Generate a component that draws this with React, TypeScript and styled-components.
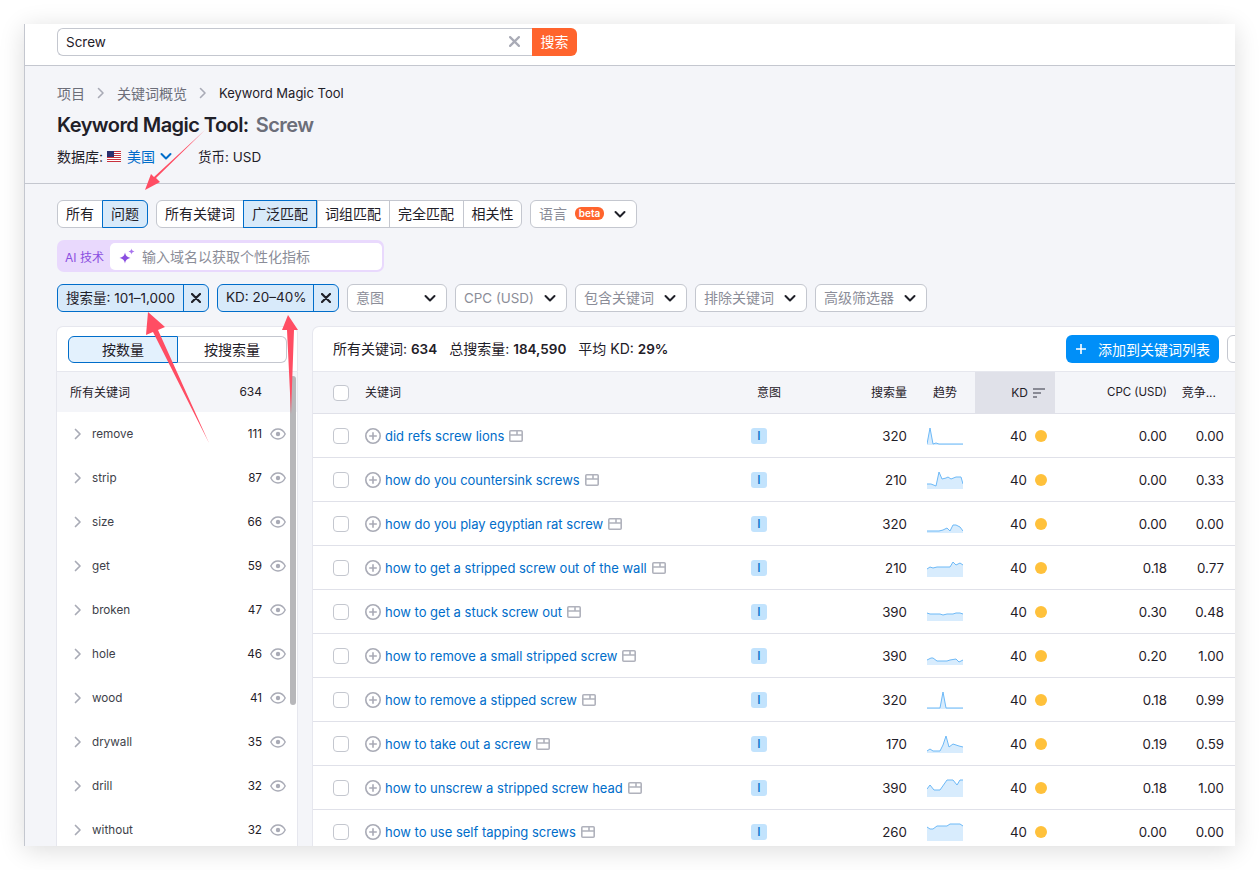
import React from 'react';
import styled, { createGlobalStyle } from 'styled-components';

const GlobalStyle = createGlobalStyle`
  html, body {
    margin: 0;
    padding: 0;
    background: #fff;
  }
  body {
    font-family: Inter, 'Noto Sans CJK SC', sans-serif;
    color: #1f2028;
  }
  * {
    box-sizing: border-box;
  }
`;

const Page = styled.div`
  width: 1259px;
  height: 870px;
  padding: 24px 24px 24px 24px;
  overflow: hidden;
`;

const Frame = styled.div`
  position: relative;
  width: 1211px;
  height: 822px;
  overflow: hidden;
  background: #f4f5f9;
  border-left: 1px solid #c4c7cf;
  box-shadow: 0 4px 24px rgba(0, 0, 0, 0.14);
`;

const SearchBar = styled.div`
  display: flex;
  height: 42px;
  padding: 4px 0 0 32px;
  background: #fff;
  border-bottom: 1px solid #c4c7cf;
`;

const SearchInput = styled.div`
  display: flex;
  align-items: center;
  justify-content: space-between;
  width: 475px;
  height: 28px;
  padding: 0 12px 1px 8px;
  background: #fff;
  border: 1px solid #c4c7cf;
  border-right: 0;
  border-radius: 6px 0 0 6px;
  font-size: 13.5px;
`;

const SearchButton = styled.div`
  display: flex;
  align-items: center;
  justify-content: center;
  width: 45px;
  height: 28px;
  padding-bottom: 2px;
  background: #ff642d;
  color: #fff;
  font-size: 14px;
  border-radius: 0 6px 6px 0;
`;

const Intro = styled.div`
  height: 118px;
  padding: 17px 0 0 32px;
  border-bottom: 1px solid #c4c7cf;
`;

const Crumbs = styled.div`
  display: flex;
  align-items: center;
  height: 20px;
  font-size: 14px;
  color: #6c6e79;
`;

const CrumbGap = styled.span`
  display: flex;
  justify-content: center;
  width: 32px;
`;

const CrumbCurrent = styled.span`
  color: #1f2028;
  font-size: 13px;
`;

const Title = styled.h1`
  display: flex;
  gap: 7px;
  margin: 10px 0 0;
  font-size: 20px;
  line-height: 24px;
  font-weight: 600;
  letter-spacing: -0.55px;
`;

const TitleQuery = styled.span`
  color: #6c6e79;
`;

const Meta = styled.div`
  display: flex;
  align-items: center;
  height: 20px;
  margin-top: 9px;
  font-size: 14px;
`;

const MetaLink = styled.span`
  color: #006dca;
  margin: 0 5px 0 6px;
`;

const Currency = styled.span`
  margin-left: 26px;
  font-size: 13.5px;
`;

const Controls = styled.div`
  padding: 16px 0 15px 32px;
`;

const ControlRow = styled.div`
  display: flex;
  gap: 8px;
  height: 28px;
`;

const Segment = styled.div`
  display: flex;
  height: 28px;
  background: #fff;
  border: 1px solid #c4c7cf;
  border-radius: 6px;
`;

const SegmentItem = styled.div<{ $w: number; $on?: boolean }>`
  display: flex;
  align-items: center;
  justify-content: center;
  width: ${p => p.$w}px;
  margin: -1px 0;
  padding-bottom: 2px;
  font-size: 14px;
  border-left: 1px solid ${p => (p.$on ? '#006dca' : '#c4c7cf')};
  border-top: 1px solid ${p => (p.$on ? '#006dca' : 'transparent')};
  border-bottom: 1px solid ${p => (p.$on ? '#006dca' : 'transparent')};
  border-right: 1px solid ${p => (p.$on ? '#006dca' : 'transparent')};
  background: ${p => (p.$on ? '#d8eafa' : 'transparent')};
  &:first-child {
    border-left-color: transparent;
  }
  &:last-child {
    margin-right: -1px;
    border-radius: 0 6px 6px 0;
  }
`;

const Select = styled.div<{ $w: number }>`
  display: flex;
  align-items: center;
  justify-content: space-between;
  width: ${p => p.$w}px;
  height: 28px;
  padding: 0 10px 0 8px;
  background: #fff;
  border: 1px solid #c4c7cf;
  border-radius: 6px;
  font-size: 14px;
  color: #8b8d98;
`;

const SelectLabel = styled.span`
  display: flex;
  align-items: center;
  gap: 8px;
  padding-bottom: 2px;
`;

const LatinLabel = styled.span`
  font-size: 13.4px;
  padding-bottom: 1px;
`;

const Beta = styled.span`
  display: flex;
  align-items: center;
  justify-content: center;
  width: 29px;
  height: 13px;
  padding-bottom: 1px;
  background: #ff642d;
  color: #fff;
  border-radius: 6px;
  font-size: 10px;
  font-weight: 600;
`;

const AiBox = styled.div`
  display: flex;
  align-items: center;
  width: 327px;
  height: 32px;
  margin: 12px 0;
  padding: 3px 2px 2px 8px;
  background: #e9d9fd;
  border-radius: 7px;
  color: #8b4fe0;
  font-size: 12px;
`;

const AiInput = styled.div`
  display: flex;
  align-items: center;
  gap: 7px;
  flex: 1;
  height: 27px;
  margin-left: 6px;
  padding: 0 0 2px 9px;
  background: #fff;
  border-radius: 5px;
  color: #8b8d98;
  font-size: 14px;
`;

const Chip = styled.div<{ $w: number }>`
  display: flex;
  width: ${p => p.$w}px;
  height: 28px;
  background: #d8eafa;
  border: 1px solid #006dca;
  border-radius: 6px;
  font-size: 13.5px;
`;

const ChipLabel = styled.span`
  display: flex;
  align-items: center;
  flex: 1;
  padding: 0 0 2px 8px;
  white-space: nowrap;
`;

const ChipClose = styled.span`
  display: flex;
  align-items: center;
  justify-content: center;
  width: 25px;
  border-left: 1px solid #006dca;
`;

const Workspace = styled.div`
  display: flex;
  gap: 16px;
  padding-left: 32px;
`;

const Sidebar = styled.div`
  position: relative;
  flex: none;
  width: 240px;
  height: 600px;
  background: #fff;
  border-radius: 6px 6px 0 0;
  box-shadow: 0 0 0 1px #e6e7ee;
`;

const SideToggle = styled.div`
  display: flex;
  height: 45px;
  padding: 9px 10px 8px 11px;
  border-bottom: 1px solid #e6e7ee;
`;

const ToggleItem = styled.div<{ $on?: boolean }>`
  display: flex;
  align-items: center;
  justify-content: center;
  flex: 1;
  font-size: 14px;
  padding-bottom: 1px;
  background: ${p => (p.$on ? '#e3f1fd' : '#fff')};
  border: 1px solid ${p => (p.$on ? '#006dca' : '#c4c7cf')};
  border-left-width: ${p => (p.$on ? 1 : 0)}px;
  border-radius: ${p => (p.$on ? '6px 0 0 6px' : '0 6px 6px 0')};
`;

const SideAll = styled.div`
  display: flex;
  align-items: center;
  justify-content: space-between;
  height: 40px;
  padding: 0 35px 2px 13px;
  background: #f4f5f9;
  font-size: 12px;
`;

const SideRow = styled.div`
  display: flex;
  align-items: center;
  height: 44px;
  padding: 0 11px 0 17px;
  font-size: 11.7px;
  color: #3e3f4a;
`;

const SideName = styled.span`
  flex: 1;
  margin-left: 10px;
`;

const SideCount = styled.span`
  margin-right: 8px;
  color: #1f2028;
`;

const ScrollThumb = styled.div`
  position: absolute;
  top: 49px;
  right: 1px;
  width: 6px;
  height: 329px;
  background: #b7b7ba;
  border-radius: 3px;
`;

const TablePanel = styled.div`
  flex: none;
  width: 940px;
  height: 600px;
  background: #fff;
  border-radius: 6px 0 0 0;
  box-shadow: 0 0 0 1px #e6e7ee;
`;

const Summary = styled.div`
  display: flex;
  align-items: center;
  height: 45px;
  padding: 0 0 0 20px;
  font-size: 14px;
  border-bottom: 1px solid #e6e7ee;
`;

const SummaryItem = styled.span`
  margin-right: 12px;
  padding-bottom: 2px;
  b {
    font-weight: 600;
    font-size: 13.5px;
  }
`;

const AddButton = styled.div`
  display: flex;
  align-items: center;
  gap: 12px;
  width: 153px;
  height: 28px;
  margin-left: auto;
  padding: 0 0 0 10px;
  background: #008ff8;
  color: #fff;
  border-radius: 6px;
  font-size: 14px;
`;

const StubButton = styled.div`
  flex: none;
  width: 26px;
  height: 28px;
  margin: 0 0 0 8px;
  border: 1px solid #c4c7cf;
  border-radius: 6px;
  background: #fff;
`;

const columns = '52px 386px 90px 66px 68px 80px 112px 57px 29px';

const HeadRow = styled.div`
  display: grid;
  grid-template-columns: ${columns};
  align-items: center;
  height: 42px;
  background: #f4f5f9;
  border-bottom: 1px solid #e0e1e9;
  font-size: 12px;
`;

const HeadText = styled.div<{ $right?: boolean; $pad?: number }>`
  padding-bottom: 2px;
  text-align: ${p => (p.$right ? 'right' : 'left')};
  padding-right: ${p => (p.$right ? p.$pad || 0 : 0)}px;
  padding-left: ${p => (p.$right ? 0 : p.$pad || 0)}px;
  white-space: nowrap;
`;

const CpcLabel = styled.span`
  font-size: 11.5px;
`;

const BodyRow = styled.div`
  display: grid;
  grid-template-columns: ${columns};
  align-items: center;
  height: 44px;
  border-bottom: 1px solid #e0e1e9;
  font-size: 13.3px;
`;

const CheckCell = styled.div`
  padding-left: 20px;
`;

const Checkbox = styled.div`
  width: 16px;
  height: 16px;
  background: #fff;
  border: 1px solid #c4c7cf;
  border-radius: 4px;
`;

const RightCell = styled.div`
  text-align: right;
`;

const KdHead = styled.div`
  display: flex;
  align-items: center;
  justify-content: flex-end;
  gap: 5px;
  align-self: stretch;
  padding-right: 10px;
  background: #e0e1e9;
`;

const KeywordCell = styled.div`
  display: flex;
  align-items: center;
`;

const KeywordLink = styled.span`
  margin: 0 5px 0 4px;
  color: #006dca;
  font-size: 13px;
  white-space: nowrap;
`;

const IntentBadge = styled.span`
  display: flex;
  align-items: center;
  justify-content: center;
  width: 16px;
  height: 16px;
  background: #c2e3fd;
  color: #006dca;
  border-radius: 3px;
  font-size: 12px;
  font-weight: 500;
`;

const TrendCell = styled.div`
  display: flex;
  padding-left: 20px;
`;

const KdCell = styled.div`
  display: flex;
  align-items: center;
  justify-content: flex-end;
  gap: 8px;
  padding-right: 8px;
`;

const KdDot = styled.span`
  width: 12px;
  height: 12px;
  border-radius: 50%;
  background: #ffc13b;
`;

const ArrowLayer = styled.svg`
  position: absolute;
  top: -24px;
  left: -25px;
  pointer-events: none;
`;

const Chevron = ({ color = '#1f2028' }: { color?: string }) => (
  <svg width="12" height="12" viewBox="0 0 12 12" fill="none">
    <path d="M1.5 4l4.5 4.5L10.5 4" stroke={color} strokeWidth="2" strokeLinecap="round" strokeLinejoin="round" />
  </svg>
);

const CrumbArrow = () => (
  <svg width="8" height="12" viewBox="0 0 8 12" fill="none">
    <path d="M1.5 1.5L6 6l-4.5 4.5" stroke="#a9abb6" strokeWidth="1.6" strokeLinecap="round" strokeLinejoin="round" />
  </svg>
);

const Close = ({ color = '#1f2028', size = 10, weight = 2.2 }: { color?: string; size?: number; weight?: number }) => (
  <svg width={size} height={size} viewBox="0 0 10 10" fill="none">
    <path d="M1 1l8 8M9 1l-8 8" stroke={color} strokeWidth={weight} strokeLinecap="round" />
  </svg>
);

const Flag = () => (
  <svg width="14" height="11" viewBox="0 0 14 11">
    <rect width="14" height="11" fill="#fff" />
    {[0, 2, 4, 6, 8, 10].map(y => (
      <rect key={y} y={y} width="14" height="1" fill="#c8313e" />
    ))}
    <rect width="7" height="6" fill="#2b2f6e" />
  </svg>
);

const Sparkle = () => (
  <svg width="16" height="16" viewBox="0 0 16 16" style={{ flex: 'none' }}>
    <path d="M6 4.5c.7 3.3 1.9 4.6 5.5 5.5-3.6.9-4.8 2.2-5.500 5.500C5.300 12.200 4.100 10.900.5 10 4.100 9.100 5.300 7.800 6 4.500z" fill="#8b4fe0" />
    <path d="M12.5.5c.4 1.8 1 2.5 3 3-2 .5-2.6 1.2-3 3-.4-1.8-1-2.5-3-3 2-.5 2.6-1.2 3-3z" fill="#a874ee" />
  </svg>
);

const RowArrow = () => (
  <svg width="8" height="12" viewBox="0 0 8 12" fill="none">
    <path d="M1.5 1.5L6 6l-4.5 4.5" stroke="#a9abb6" strokeWidth="1.7" strokeLinecap="round" strokeLinejoin="round" />
  </svg>
);

const Eye = () => (
  <svg width="16" height="12" viewBox="0 0 16 12" fill="none">
    <path d="M.8 6C2.5 2.7 5 1 8 1s5.5 1.7 7.2 5c-1.7 3.3-4.2 5-7.2 5S2.5 9.3.8 6z" stroke="#a9abb6" strokeWidth="1.4" />
    <circle cx="8" cy="6" r="2.2" fill="#a9abb6" />
  </svg>
);

const PlusCircle = () => (
  <svg width="16" height="16" viewBox="0 0 16 16" fill="none" style={{ flex: 'none' }}>
    <circle cx="8" cy="8" r="7.2" stroke="#a9abb6" strokeWidth="1.6" />
    <path d="M8 4.2v7.6M4.2 8h7.6" stroke="#a9abb6" strokeWidth="1.6" />
  </svg>
);

const SerpIcon = () => (
  <svg width="14" height="12" viewBox="0 0 14 12" fill="none" style={{ flex: 'none' }}>
    <rect x=".8" y=".8" width="12.4" height="10.4" rx="1" stroke="#b0b2bc" strokeWidth="1.6" />
    <path d="M1 5h12M8 1v4" stroke="#b0b2bc" strokeWidth="1.6" />
  </svg>
);

const SortIcon = () => (
  <svg width="12" height="10" viewBox="0 0 12 10" fill="none">
    <path d="M0 1h12M0 5h8M0 9h4" stroke="#6c6e79" strokeWidth="1.5" />
  </svg>
);

const PlusIcon = () => (
  <svg width="10" height="10" viewBox="0 0 10 10" fill="none">
    <path d="M5 0v10M0 5h10" stroke="#fff" strokeWidth="1.6" />
  </svg>
);

const Spark = ({ points }: { points: number[][] }) => {
  const line = points.map(p => p.join(',')).join(' ');
  return (
    <svg width="36" height="18" viewBox="0 0 36 18">
      <polygon points={`0,18 ${line} 36,18`} fill="#d8ecfd" />
      <polyline points={line} fill="none" stroke="#6db9f7" strokeWidth="1" />
    </svg>
  );
};

const sideRows: [string, number][] = [
  ['remove', 111],
  ['strip', 87],
  ['size', 66],
  ['get', 59],
  ['broken', 47],
  ['hole', 46],
  ['wood', 41],
  ['drywall', 35],
  ['drill', 32],
  ['without', 32],
];

const tableRows: { kw: string; vol: number; cpc: string; comp: string; trend: number[][] }[] = [
  { kw: 'did refs screw lions', vol: 320, cpc: '0.00', comp: '0.00', trend: [[0, 17], [3, 1], [6, 17], [9, 16], [12, 17], [36, 17]] },
  { kw: 'how do you countersink screws', vol: 210, cpc: '0.00', comp: '0.33', trend: [[0, 13], [4, 13], [9, 15], [12, 1], [15, 8], [19, 7], [21, 6], [24, 8], [29, 6], [34, 6], [36, 13]] },
  { kw: 'how do you play egyptian rat screw', vol: 320, cpc: '0.00', comp: '0.00', trend: [[0, 16], [12, 16], [16, 15], [20, 13], [23, 16], [26, 10], [29, 10], [33, 12], [36, 16]] },
  { kw: 'how to get a stripped screw out of the wall', vol: 210, cpc: '0.18', comp: '0.77', trend: [[0, 10], [3, 8], [6, 9], [10, 8], [23, 8], [26, 3], [29, 6], [33, 4], [36, 6]] },
  { kw: 'how to get a stuck screw out', vol: 390, cpc: '0.30', comp: '0.48', trend: [[0, 10], [3, 11], [13, 11], [16, 12], [20, 11], [26, 11], [29, 10], [33, 10], [36, 11]] },
  { kw: 'how to remove a small stripped screw', vol: 390, cpc: '0.20', comp: '1.00', trend: [[0, 13], [4, 11], [6, 11], [10, 14], [20, 14], [23, 13], [29, 12], [32, 15], [36, 13]] },
  { kw: 'how to remove a stipped screw', vol: 320, cpc: '0.18', comp: '0.99', trend: [[0, 17], [13, 17], [16, 1], [19, 17], [36, 17]] },
  { kw: 'how to take out a screw', vol: 170, cpc: '0.19', comp: '0.59', trend: [[0, 16], [3, 14], [6, 16], [13, 16], [16, 10], [19, 1], [22, 12], [26, 9], [32, 11], [36, 12]] },
  { kw: 'how to unscrew a stripped screw head', vol: 390, cpc: '0.18', comp: '1.00', trend: [[0, 10], [3, 6], [7, 11], [13, 11], [20, 1], [26, 1], [30, 6], [33, 1], [36, 1]] },
  { kw: 'how to use self tapping screws', vol: 260, cpc: '0.00', comp: '0.00', trend: [[0, 4], [3, 6], [6, 6], [10, 3], [20, 3], [23, 1], [33, 1], [36, 3]] },
];

const App = (): JSX.Element => {
  return (
    <Page>
      <GlobalStyle />
      <Frame>
        <SearchBar>
          <SearchInput>
            Screw
            <Close color="#a9abb6" size={11} weight={2} />
          </SearchInput>
          <SearchButton>搜索</SearchButton>
        </SearchBar>

        <Intro>
          <Crumbs>
            项目
            <CrumbGap><CrumbArrow /></CrumbGap>
            关键词概览
            <CrumbGap><CrumbArrow /></CrumbGap>
            <CrumbCurrent>Keyword Magic Tool</CrumbCurrent>
          </Crumbs>
          <Title>
            Keyword Magic Tool:
            <TitleQuery>Screw</TitleQuery>
          </Title>
          <Meta>
            数据库:&nbsp;
            <Flag />
            <MetaLink>美国</MetaLink>
            <Chevron color="#006dca" />
            <Currency>货币: USD</Currency>
          </Meta>
        </Intro>

        <Controls>
          <ControlRow>
            <Segment>
              <SegmentItem $w={44}>所有</SegmentItem>
              <SegmentItem $w={46} $on>问题</SegmentItem>
            </Segment>
            <Segment>
              <SegmentItem $w={86}>所有关键词</SegmentItem>
              <SegmentItem $w={74} $on>广泛匹配</SegmentItem>
              <SegmentItem $w={72}>词组匹配</SegmentItem>
              <SegmentItem $w={74}>完全匹配</SegmentItem>
              <SegmentItem $w={59}>相关性</SegmentItem>
            </Segment>
            <Select $w={107}>
              <SelectLabel>语言<Beta>beta</Beta></SelectLabel>
              <Chevron />
            </Select>
          </ControlRow>

          <AiBox>
            AI 技术
            <AiInput>
              <Sparkle />
              输入域名以获取个性化指标
            </AiInput>
          </AiBox>

          <ControlRow>
            <Chip $w={152}>
              <ChipLabel>搜索量: 101–1,000</ChipLabel>
              <ChipClose><Close /></ChipClose>
            </Chip>
            <Chip $w={122}>
              <ChipLabel>KD: 20–40%</ChipLabel>
              <ChipClose><Close /></ChipClose>
            </Chip>
            <Select $w={100}><SelectLabel>意图</SelectLabel><Chevron /></Select>
            <Select $w={112}><LatinLabel>CPC (USD)</LatinLabel><Chevron /></Select>
            <Select $w={112}><SelectLabel>包含关键词</SelectLabel><Chevron /></Select>
            <Select $w={112}><SelectLabel>排除关键词</SelectLabel><Chevron /></Select>
            <Select $w={112}><SelectLabel>高级筛选器</SelectLabel><Chevron /></Select>
          </ControlRow>
        </Controls>

        <Workspace>
          <Sidebar>
            <SideToggle>
              <ToggleItem $on>按数量</ToggleItem>
              <ToggleItem>按搜索量</ToggleItem>
            </SideToggle>
            <SideAll>
              <span>所有关键词</span>
              <span>634</span>
            </SideAll>
            {sideRows.map(([name, count]) => (
              <SideRow key={name}>
                <RowArrow />
                <SideName>{name}</SideName>
                <SideCount>{count}</SideCount>
                <Eye />
              </SideRow>
            ))}
            <ScrollThumb />
          </Sidebar>

          <TablePanel>
            <Summary>
              <SummaryItem>所有关键词: <b>634</b></SummaryItem>
              <SummaryItem>总搜索量: <b>184,590</b></SummaryItem>
              <SummaryItem>平均 KD: <b>29%</b></SummaryItem>
              <AddButton><PlusIcon />添加到关键词列表</AddButton>
              <StubButton />
            </Summary>
            <HeadRow>
              <CheckCell><Checkbox /></CheckCell>
              <HeadText>关键词</HeadText>
              <HeadText $pad={6}>意图</HeadText>
              <HeadText $right>搜索量</HeadText>
              <HeadText $pad={26}>趋势</HeadText>
              <KdHead>KD <SortIcon /></KdHead>
              <HeadText $right><CpcLabel>CPC (USD)</CpcLabel></HeadText>
              <HeadText $right $pad={8}>竞争...</HeadText>
            </HeadRow>
            {tableRows.map(row => (
              <BodyRow key={row.kw}>
                <CheckCell><Checkbox /></CheckCell>
                <KeywordCell>
                  <PlusCircle />
                  <KeywordLink>{row.kw}</KeywordLink>
                  <SerpIcon />
                </KeywordCell>
                <div><IntentBadge>I</IntentBadge></div>
                <RightCell>{row.vol}</RightCell>
                <TrendCell><Spark points={row.trend} /></TrendCell>
                <KdCell>40<KdDot /></KdCell>
                <RightCell>{row.cpc}</RightCell>
                <RightCell>{row.comp}</RightCell>
              </BodyRow>
            ))}
          </TablePanel>
        </Workspace>

        <ArrowLayer width="1259" height="870" viewBox="0 0 1259 870">
          <polygon points="205,130 156,178 160,182 145,190 151,174 154,177" fill="#ff4d63" />
          <polygon points="209,443 158,330 165,327 148,312 146,335 153,332" fill="#ff4d63" />
          <polygon points="291,414 294,330 298,330 288,315 282,330 287,330" fill="#ff4d63" />
        </ArrowLayer>
      </Frame>
    </Page>
  );
};

export default App;
